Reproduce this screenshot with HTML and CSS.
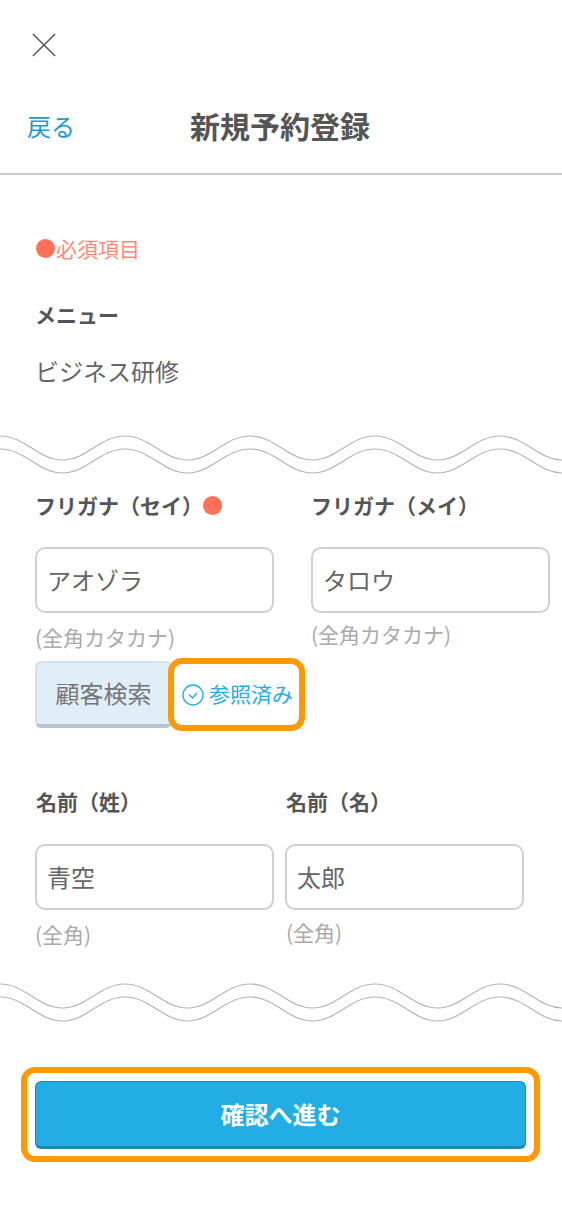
FILE: index.html
```html
<!DOCTYPE html>
<html lang="ja">
<head>
  <meta charset="UTF-8" />
  <title>新規予約登録</title>
  <meta name="viewport" content="width=device-width, initial-scale=1.0" />
  <link rel="stylesheet" href="styles.css">
</head>
<body>
<div class="close-row">
  <svg class="close-icon" width="26" height="26" viewBox="0 0 26 26"><path d="M1 1L25 25M25 1L1 25" /></svg>
</div>
<header class="nav">
  <a class="back">戻る</a>
  <h1 class="title">新規予約登録</h1>
  <span></span>
</header>
<section class="intro">
  <p class="required-note"><span class="dot"></span>必須項目</p>
  <p class="label menu-label">メニュー</p>
  <p class="menu-value">ビジネス研修</p>
</section>
<svg class="wave" width="562" height="40" viewBox="0 0 562 40">
  <path d="M-125 1C-100 1 -87 25 -62.5 25S-25 1 0 1S38 25 62.5 25S100 1 125 1S163 25 187.5 25S225 1 250 1S288 25 312.5 25S350 1 375 1S413 25 437.5 25S475 1 500 1S538 25 562.5 25S600 1 625 1" />
  <path d="M-125 14C-100 14 -87 38 -62.5 38S-25 14 0 14S38 38 62.5 38S100 14 125 14S163 38 187.5 38S225 14 250 14S288 38 312.5 38S350 14 375 14S413 38 437.5 38S475 14 500 14S538 38 562.5 38S600 14 625 14" />
</svg>
<section class="form">
  <div class="row row-kana">
    <div class="field">
      <p class="label">フリガナ（セイ）<span class="dot dot-label"></span></p>
      <div class="input">アオゾラ</div>
      <p class="hint">(全角カタカナ)</p>
      <div class="actions">
        <button class="search-btn">顧客検索</button>
        <div class="highlight status">
          <svg class="check" width="22" height="22" viewBox="0 0 22 22"><circle cx="11" cy="11" r="10" /><path d="M7 10.5L10.5 14L15 9" /></svg>
          <span class="status-text">参照済み</span>
        </div>
      </div>
    </div>
    <div class="field">
      <p class="label">フリガナ（メイ）</p>
      <div class="input">タロウ</div>
      <p class="hint hint-right">(全角カタカナ)</p>
    </div>
  </div>
  <div class="row row-name">
    <div class="field">
      <p class="label">名前（姓）</p>
      <div class="input">青空</div>
      <p class="hint">(全角)</p>
    </div>
    <div class="field">
      <p class="label">名前（名）</p>
      <div class="input">太郎</div>
      <p class="hint hint-right-name">(全角)</p>
    </div>
  </div>
</section>
<svg class="wave wave-bottom" width="562" height="40" viewBox="0 0 562 40">
  <path d="M-125 1C-100 1 -87 25 -62.5 25S-25 1 0 1S38 25 62.5 25S100 1 125 1S163 25 187.5 25S225 1 250 1S288 25 312.5 25S350 1 375 1S413 25 437.5 25S475 1 500 1S538 25 562.5 25S600 1 625 1" />
  <path d="M-125 14C-100 14 -87 38 -62.5 38S-25 14 0 14S38 38 62.5 38S100 14 125 14S163 38 187.5 38S225 14 250 14S288 38 312.5 38S350 14 375 14S413 38 437.5 38S475 14 500 14S538 38 562.5 38S600 14 625 14" />
</svg>
<div class="highlight submit-box">
  <button class="submit-btn">確認へ進む</button>
</div>
</body>
</html>
```

FILE: styles.css
```css
html, body {
  margin: 0;
  padding: 0;
  background: #fff;
  color: #666;
  font-family: "Noto Sans CJK JP", "Noto Sans", sans-serif;
  width: 562px;
  height: 1218px;
  overflow: hidden;
}
p, h1 {
  margin: 0;
  font-weight: normal;
}
.close-row {
  height: 90px;
  padding-left: 32px;
  display: flex;
  align-items: center;
}
.close-icon {
  width: 24px;
  height: 24px;
}
.close-icon path {
  fill: none;
  stroke: #555;
  stroke-width: 1.6;
}
.nav {
  display: grid;
  grid-template-columns: 1fr auto 1fr;
  align-items: center;
  height: 70px;
  padding: 0 0 13px 27px;
  box-sizing: content-box;
  border-bottom: 2px solid #c8cecd;
}
.back {
  font-size: 24px;
  color: #1d9ad3;
}
.title {
  font-size: 30px;
  font-weight: bold;
  line-height: 70px;
  color: #555;
  margin-left: -29px;
}
.intro {
  padding: 58px 36px 0;
}
.required-note {
  display: flex;
  align-items: center;
  font-size: 21px;
  line-height: 30px;
  color: #ff8a75;
}
.dot {
  display: inline-block;
  width: 19px;
  height: 19px;
  margin-right: 1px;
  border-radius: 50%;
  background: #ff7058;
}
.label {
  display: flex;
  align-items: center;
  font-size: 21px;
  font-weight: bold;
  line-height: 28px;
  padding-bottom: 2px;
  color: #555;
  white-space: nowrap;
}
.dot-label {
  margin-left: 0;
}
.menu-label {
  margin: 37px 0 0 -1px;
}
.menu-value {
  margin: 24px 0 0 -1px;
  font-size: 24px;
  line-height: 34px;
}
.wave {
  display: block;
  margin-top: 47px;
}
.wave path {
  fill: none;
  stroke: #b4b4b4;
  stroke-width: 1.2;
}
.wave-bottom {
  margin-top: 36px;
}
.form {
  padding: 16px 0 0 35px;
}
.row {
  display: flex;
  align-items: flex-start;
}
.row-kana {
  gap: 37px;
}
.row-name {
  gap: 11px;
  margin-top: 56px;
}
.row-name .label {
  padding-left: 1px;
}
.row-name .input {
  margin-top: 27px;
}
.field {
  width: 239px;
}
.input {
  box-sizing: border-box;
  height: 66px;
  margin-top: 26px;
  padding: 0 0 2px 10px;
  display: flex;
  align-items: center;
  font-size: 24px;
  border: 2px solid #d0d0d0;
  border-radius: 10px;
  background: #fff;
}
.hint {
  margin-top: 11px;
  font-size: 21px;
  line-height: 26px;
  color: #aaa;
  white-space: nowrap;
}
.hint-right {
  margin-top: 8px;
}
.hint-right-name {
  margin: 9px 0 0 1px;
}
.actions {
  display: flex;
  align-items: center;
  width: 270px;
  margin-top: 8px;
}
.search-btn {
  flex: none;
  width: 137px;
  height: 67px;
  padding: 0 0 2px;
  font-family: inherit;
  font-size: 24px;
  color: #777;
  background: #e0eef7;
  border: 2px solid #d5e0e8;
  border-bottom: 4px solid #b8c4d0;
  border-radius: 6px;
}
.highlight {
  box-sizing: border-box;
  background: #fff;
  border: 6px solid #ff9900;
  border-radius: 14px;
}
.status {
  flex: none;
  width: 137px;
  height: 73px;
  margin-left: -4px;
  padding-left: 8px;
  display: flex;
  align-items: center;
  gap: 5px;
  font-size: 21px;
  color: #22aee5;
  white-space: nowrap;
}
.status-text {
  padding-bottom: 4px;
}
.check {
  flex: none;
}
.check circle, .check path {
  fill: none;
  stroke: #22aee5;
  stroke-width: 1.4;
}
.submit-box {
  width: 519px;
  height: 95px;
  margin: 44px 0 0 21px;
  padding: 8px 8px 7px;
}
.submit-btn {
  display: block;
  width: 100%;
  height: 68px;
  padding: 0 0 2px;
  font-family: inherit;
  font-size: 24px;
  font-weight: bold;
  color: #fff;
  background: #22aee5;
  border: 1px solid #1a8ab8;
  border-bottom: 3px solid #1a87b5;
  border-radius: 6px;
}
```
